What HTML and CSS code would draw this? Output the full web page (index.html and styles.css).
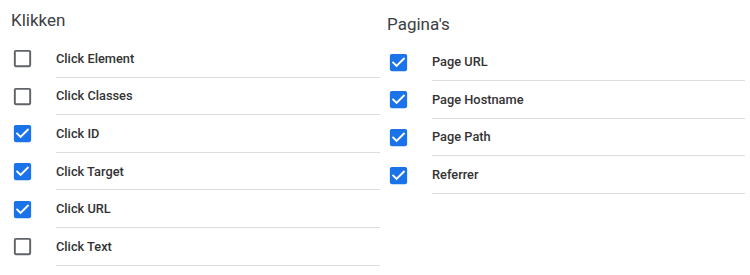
FILE: index.html
```html
<!DOCTYPE html>
<html lang="nl">
<head>
    <meta charset="UTF-8">
    <meta name="viewport" content="width=device-width, initial-scale=1.0">
    <title>Variabelen</title>
    <link rel="stylesheet" href="styles.css">
</head>
<body>
    <div class="columns">
        <div class="col col-left">
            <h2>Klikken</h2>
            <div class="row">
                <svg class="box" viewBox="0 0 24 24"><path d="M19 5v14H5V5h14m0-2H5c-1.1 0-2 .9-2 2v14c0 1.1.9 2 2 2h14c1.1 0 2-.9 2-2V5c0-1.1-.9-2-2-2z"/></svg>
                <span class="label">Click Element</span>
            </div>
            <div class="row">
                <svg class="box" viewBox="0 0 24 24"><path d="M19 5v14H5V5h14m0-2H5c-1.1 0-2 .9-2 2v14c0 1.1.9 2 2 2h14c1.1 0 2-.9 2-2V5c0-1.1-.9-2-2-2z"/></svg>
                <span class="label">Click Classes</span>
            </div>
            <div class="row">
                <svg class="box checked" viewBox="0 0 24 24"><path d="M19 3H5c-1.11 0-2 .9-2 2v14c0 1.1.89 2 2 2h14c1.11 0 2-.9 2-2V5c0-1.1-.89-2-2-2zm-9 14l-5-5 1.41-1.41L10 14.170l7.59-7.59L19 8l-9 9z"/></svg>
                <span class="label">Click ID</span>
            </div>
            <div class="row">
                <svg class="box checked" viewBox="0 0 24 24"><path d="M19 3H5c-1.11 0-2 .9-2 2v14c0 1.1.89 2 2 2h14c1.11 0 2-.9 2-2V5c0-1.1-.89-2-2-2zm-9 14l-5-5 1.41-1.41L10 14.17l7.59-7.59L19 8l-9 9z"/></svg>
                <span class="label">Click Target</span>
            </div>
            <div class="row">
                <svg class="box checked" viewBox="0 0 24 24"><path d="M19 3H5c-1.11 0-2 .9-2 2v14c0 1.1.89 2 2 2h14c1.11 0 2-.9 2-2V5c0-1.1-.89-2-2-2zm-9 14l-5-5 1.41-1.41L10 14.17l7.59-7.59L19 8l-9 9z"/></svg>
                <span class="label">Click URL</span>
            </div>
            <div class="row">
                <svg class="box" viewBox="0 0 24 24"><path d="M19 5v14H5V5h14m0-2H5c-1.1 0-2 .9-2 2v14c0 1.1.9 2 2 2h14c1.1 0 2-.9 2-2V5c0-1.1-.9-2-2-2z"/></svg>
                <span class="label">Click Text</span>
            </div>
        </div>

        <div class="col col-right">
            <h2>Pagina's</h2>
            <div class="row">
                <svg class="box checked" viewBox="0 0 24 24"><path d="M19 3H5c-1.11 0-2 .9-2 2v14c0 1.1.89 2 2 2h14c1.11 0 2-.9 2-2V5c0-1.1-.89-2-2-2zm-9 14l-5-5 1.41-1.41L10 14.17l7.59-7.59L19 8l-9 9z"/></svg>
                <span class="label">Page URL</span>
            </div>
            <div class="row">
                <svg class="box checked" viewBox="0 0 24 24"><path d="M19 3H5c-1.11 0-2 .9-2 2v14c0 1.1.89 2 2 2h14c1.11 0 2-.9 2-2V5c0-1.1-.89-2-2-2zm-9 14l-5-5 1.41-1.41L10 14.17l7.59-7.59L19 8l-9 9z"/></svg>
                <span class="label">Page Hostname</span>
            </div>
            <div class="row">
                <svg class="box checked" viewBox="0 0 24 24"><path d="M19 3H5c-1.11 0-2 .9-2 2v14c0 1.1.89 2 2 2h14c1.11 0 2-.9 2-2V5c0-1.1-.89-2-2-2zm-9 14l-5-5 1.41-1.41L10 14.17l7.59-7.59L19 8l-9 9z"/></svg>
                <span class="label">Page Path</span>
            </div>
            <div class="row">
                <svg class="box checked" viewBox="0 0 24 24"><path d="M19 3H5c-1.11 0-2 .9-2 2v14c0 1.1.89 2 2 2h14c1.11 0 2-.9 2-2V5c0-1.1-.89-2-2-2zm-9 14l-5-5 1.41-1.41L10 14.17l7.59-7.59L19 8l-9 9z"/></svg>
                <span class="label">Referrer</span>
            </div>
        </div>
    </div>
</body>
</html>
```

FILE: styles.css
```css
body {
    margin: 0;
    background: #fff;
    font-family: Roboto, "Liberation Sans", Arial, sans-serif;
    color: #202124;
}
.columns {
    display: flex;
    padding: 10px 0 0 11px;
}
.col-left {
    width: 369px;
}
.col-right {
    width: 358px;
    margin-left: 7px;
    padding-top: 3.5px;
}
h2 {
    margin: 0 0 10px;
    font-size: 17px;
    font-weight: 400;
    line-height: 20px;
    color: #3c4043;
}
.row {
    display: flex;
    align-items: center;
    height: 37.6px;
}
.box {
    width: 23px;
    height: 23px;
    flex: none;
    fill: #5f6368;
}
.box.checked {
    fill: #1a73e8;
}
.label {
    flex: 1;
    align-self: stretch;
    display: flex;
    align-items: center;
    margin-left: 22px;
    border-bottom: 1px solid #dadce0;
    font-size: 12.8px;
    font-weight: 500;
    color: #333;
}
```
